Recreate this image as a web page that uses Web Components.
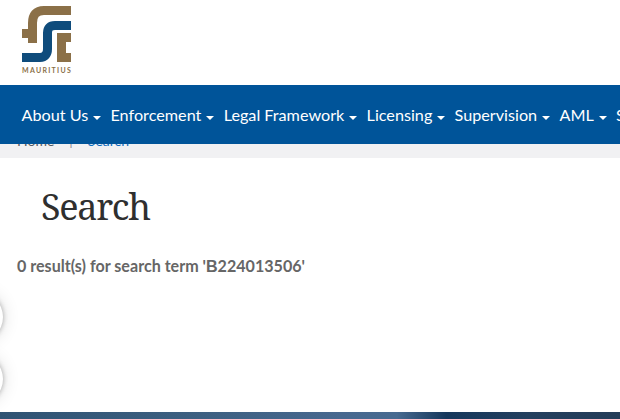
<!DOCTYPE html>
<html>
<head>
<meta charset="utf-8">
<title>Search</title>
<style>
  html, body { margin: 0; padding: 0; background: #fff; height: 419px; overflow: hidden; }
  body { font-family: Lato, sans-serif; display: flex; flex-direction: column; position: relative; }
</style>
</head>
<body>
<site-header></site-header>
<main-nav>
  <nav-item>About Us</nav-item>
  <nav-item>Enforcement</nav-item>
  <nav-item>Legal Framework</nav-item>
  <nav-item>Licensing</nav-item>
  <nav-item>Supervision</nav-item>
  <nav-item>AML</nav-item>
  <nav-item>Statistics</nav-item>
</main-nav>
<bread-crumb></bread-crumb>
<search-results heading="Search" term="224013506"></search-results>
<page-footer></page-footer>
<side-buttons></side-buttons>

<script>
(function (document, window) {

  function define(name, css, html) {
    window.customElements.define(name, class extends HTMLElement {
      constructor() {
        super();
        const root = this.attachShadow({ mode: "open" });
        const $template = document.createElement("template");
        const markup = typeof html === 'function' ? html(this) : html;
        $template.innerHTML = `<style>${css}</style>${markup}`;
        root.appendChild($template.content.cloneNode(true));
      }
    });
  }

  define('site-header', `
    :host { display: block; height: 85px; background: #fff; flex: none; }
    .logo { display: flex; flex-direction: column; align-items: flex-start; padding: 6px 0 0 22px; }
    svg { display: block; }
    span {
      font: 700 7px/8px Lato, sans-serif;
      letter-spacing: 1.3px;
      color: #8a7049;
      margin-top: 4px;
      white-space: nowrap;
    }
  `, `
    <div class="logo">
      <svg width="49" height="56" viewBox="0 0 49 56">
        <g fill="none" stroke-width="9">
          <path stroke="#8b7048" d="M49 4.500H22C14 4.500 10.500 9 10.500 17V37" />
          <path stroke="#8b7048" d="M0 27.500H10" />
          <path stroke="#8b7048" d="M49 31.500H39.500V51.500H49" />
          <path stroke="#0f4c7c" d="M49 19.500H33C28 19.500 25.500 22 25.500 27V43C25.500 48 23 51.500 18 51.500H0" />
        </g>
      </svg>
      <span>MAURITIUS</span>
    </div>
  `);

  define('main-nav', `
    :host {
      display: flex;
      flex: none;
      height: 59px;
      align-items: center;
      gap: 9.3px;
      padding: 0 0 0 21.5px;
      box-sizing: border-box;
      background: #005499;
      overflow: hidden;
      white-space: nowrap;
      position: relative;
      z-index: 1;
    }
  `, `<slot></slot>`);

  define('nav-item', `
    :host {
      display: inline-flex;
      align-items: center;
      flex: none;
      gap: 5px;
      color: #fff;
      font: 400 16.200px/20px Lato, sans-serif;
    }
    i {
      display: block;
      margin-top: 7px;
      width: 0;
      height: 0;
      border-left: 4.500px solid transparent;
      border-right: 4.500px solid transparent;
      border-top: 4.500px solid #fff;
    }
  `, `<slot></slot><i></i>`);

  define('bread-crumb', `
    :host {
      display: block;
      flex: none;
      height: 14px;
      background: #f1f1f3;
      overflow: visible;
      position: relative;
    }
    div {
      display: flex;
      gap: 15px;
      margin-top: -12px;
      padding-left: 17px;
      font: 400 14px/17px Lato, sans-serif;
      color: #55595f;
    }
    b { font-weight: 400; color: #8f8f93; }
    a { color: #0a6cc0; }
  `, `<div><span>Home</span><b>|</b><a>Search</a></div>`);

  define('search-results', `
    :host { display: block; flex: 1 1 auto; padding: 26px 0 0 17px; }
    h1 {
      margin: 0 0 0 24px;
      font: 400 36px/46px "Noto Serif", "Liberation Serif", serif;
      letter-spacing: -1.3px;
      color: #2f2f2f;
    }
    p {
      margin: 26px 0 0;
      font: 700 16.100px/20px Lato, sans-serif;
      color: #666;
    }
    span { font-family: "Liberation Sans", sans-serif; }
  `, (el) => `
    <h1>${el.getAttribute('heading')}</h1>
    <p>0 result(s) for search term '<span>B</span>${el.getAttribute('term')}'</p>
  `);

  define('page-footer', `
    :host {
      display: block;
      flex: none;
      height: 7px;
      background: linear-gradient(90deg, #2f5373 0%, #3c5f80 30%, #47688f 55%, #476a90 64%, #15375b 72%, #233f5e 85%, #233c58 100%);
    }
  `, ``);

  define('side-buttons', `
    :host {
      position: absolute;
      left: 0;
      top: 292px;
      width: 12px;
      display: flex;
      flex-direction: column;
      gap: 12px;
    }
    div {
      width: 50px;
      height: 50px;
      margin-left: -47px;
      border-radius: 50%;
      background: #fff;
      box-shadow: 0 0 5px rgba(0, 0, 0, 0.3), 0 0 18px rgba(0, 0, 0, 0.14);
    }
  `, `<div></div><div></div>`);

})(document, window);
</script>
</body>
</html>
